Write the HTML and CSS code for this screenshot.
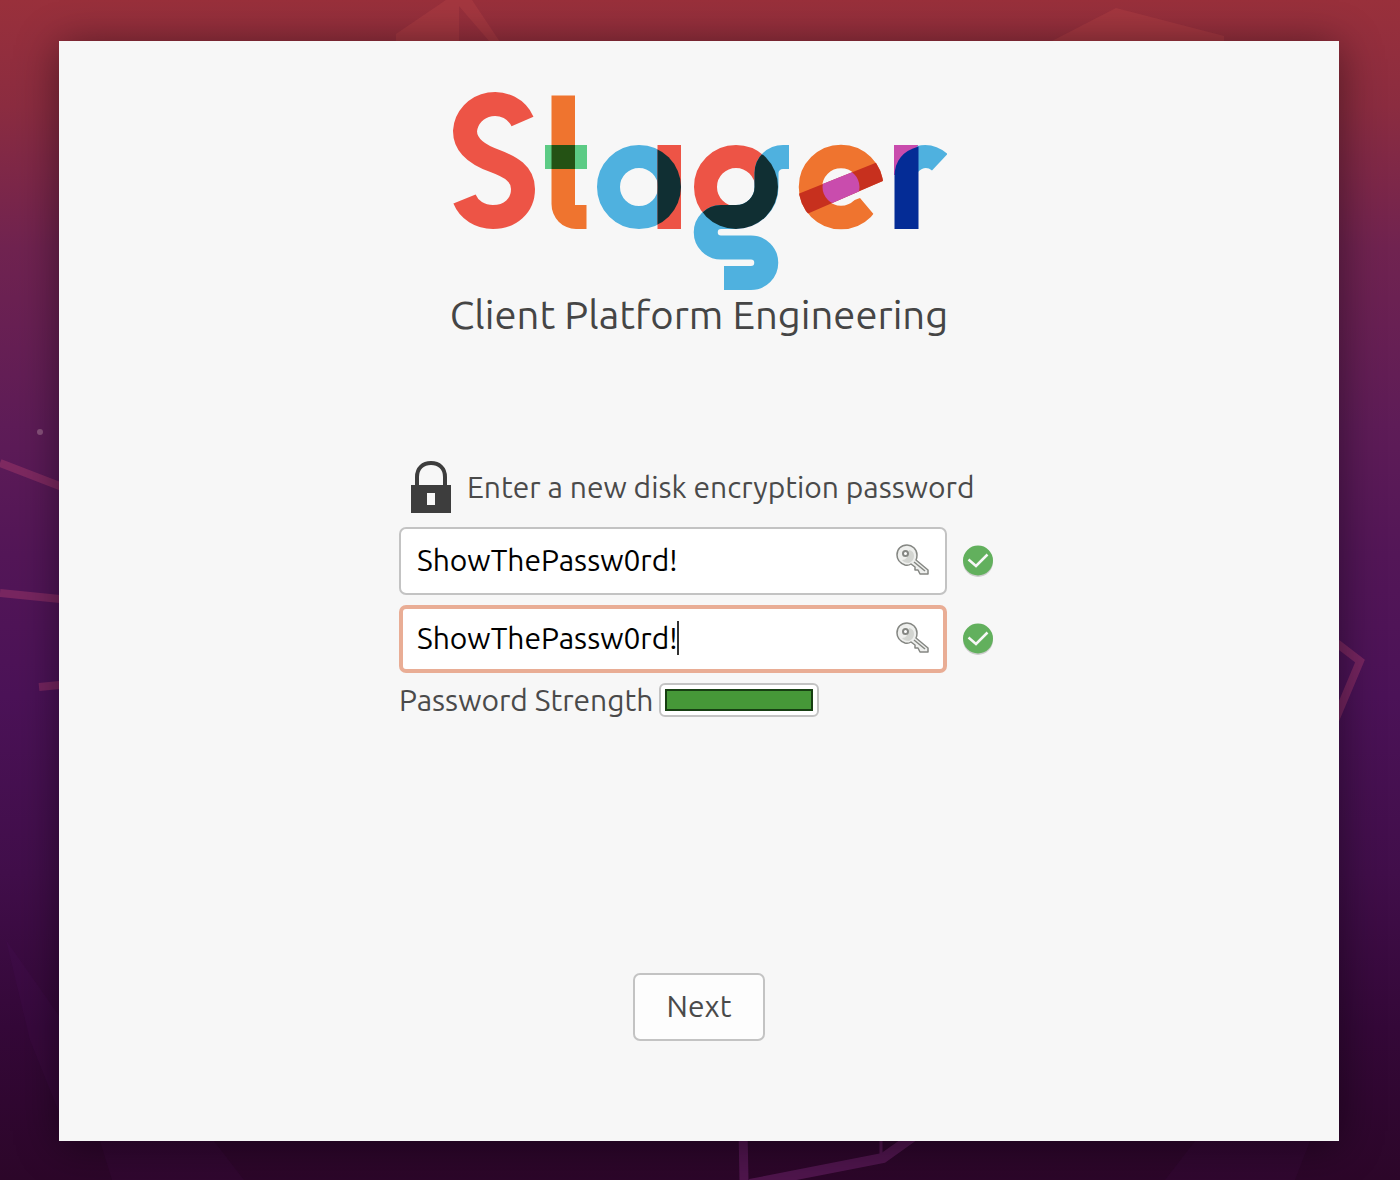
FILE: index.html
```html
<!DOCTYPE html>
<html lang="en">
<head>
<meta charset="utf-8">
<meta name="viewport" content="width=device-width, initial-scale=1">
<title>Stager</title>
<link rel="stylesheet" href="styles.css">
</head>
<body>
<svg class="wallpaper" viewBox="0 0 1400 1180" preserveAspectRatio="none" aria-hidden="true">
  <g fill="#c04a4a" opacity=".3">
    <path d="M396 34L446 0H472L500 42H490L459 6V42H396Z"/>
    <path d="M1050 42L1116 8L1224 36V42Z"/>
  </g>
  <g fill="none" stroke="#a83c6c" stroke-width="8" opacity=".45">
    <path d="M0 463L70 490M0 593L70 600M39 687L70 684M1330 638L1360 661L1326 742"/>
  </g>
  <g fill="none" stroke="#7a2878" opacity=".45">
    <path stroke-width="9" d="M743 1130L744 1180"/>
    <path stroke-width="10" d="M750 1184L883 1158L914 1136"/>
    <path stroke-width="3" d="M881 1136V1158"/>
  </g>
  <path fill="#7a2898" opacity=".06" d="M6 940L62 1020V1120L30 1040ZM100 1141H214L244 1180H112ZM1195 1141H1310L1295 1180H1165Z"/>
  <circle cx="40" cy="432" r="3" fill="#88527c"/>
</svg>

<main class="dialog">
  <header class="brand">
    <svg class="logo" viewBox="451 91 496 200" role="img" aria-label="Stager">
      <defs>
        <clipPath id="a-bowl"><circle cx="639" cy="187" r="42"/></clipPath>
        <clipPath id="g-bowl"><circle cx="736" cy="187" r="42"/></clipPath>
        <clipPath id="e-bowl"><circle cx="841" cy="187" r="42.500"/></clipPath>
        <clipPath id="e-hole"><circle cx="841" cy="187" r="18.500"/></clipPath>
        <clipPath id="e-opening"><path d="M790 140H890V178L840 199L852 201L860 198L876 217L890 235H790Z"/></clipPath>
        <path id="g-tail" fill="none" stroke-width="24" d="M789 157H783A16.500 16 0 0 0 766.500 173V187A30.500 30 0 0 1 736 217H721A15 15 0 0 0 721 247.500H751A15 15 0 0 1 751 278H724"/>
      </defs>
      <path fill="none" stroke="#ed5446" stroke-width="24" d="M522.500 121.500A30 29 0 0 0 465 131C465 146 478 155 495 161C511 167 523 174 523 189C523 206 510 217 493 217C480 217 469 210 464.500 199"/>
      <path fill="#ef742f" d="M551.500 95.500H575V205H586.500V229H576A24.500 25 0 0 1 551.500 204Z"/>
      <path fill="#5ccb85" d="M545 145H587V169H545Z"/>
      <path fill="#245214" d="M551.500 145H575V169H551.500Z"/>
      <circle cx="639" cy="187" r="30.500" fill="none" stroke="#4fb1df" stroke-width="23"/>
      <path fill="#ed5446" d="M657.500 145H681V229H657.500Z"/>
      <path fill="#102f33" clip-path="url(#a-bowl)" d="M657.500 145H681V229H657.500Z"/>
      <circle cx="736" cy="187" r="30.500" fill="none" stroke="#ed5446" stroke-width="23"/>
      <use href="#g-tail" stroke="#4fb1df"/>
      <use href="#g-tail" stroke="#102f33" clip-path="url(#g-bowl)"/>
      <circle cx="841" cy="187" r="30.500" fill="none" stroke="#ef742f" stroke-width="23.500" clip-path="url(#e-opening)"/>
      <path fill="#c7301e" clip-path="url(#e-bowl)" d="M798 194L890 157V178L800 217Z"/>
      <path fill="#c94cad" clip-path="url(#e-hole)" d="M798 194L890 157V178L800 217Z"/>
      <path fill="#c94cad" d="M894 145H918V175H894Z"/>
      <path fill="#4fb1df" d="M917 146Q934 142 947.500 154L932 170.500Q925 165 918 172Z"/>
      <path fill="#042c96" d="M894.500 229V176Q895 153 918.500 146.500V229Z"/>
    </svg>
    <h1 class="tagline">Client Platform Engineering</h1>
  </header>

  <form class="form">
    <div class="prompt">
      <svg class="lock" viewBox="0 0 40 52" aria-hidden="true">
        <path fill="none" stroke="#3d3d3d" stroke-width="4" d="M6 26V16C6 7 12 2 20 2S34 7 34 16V26"/>
        <path fill="#3d3d3d" fill-rule="evenodd" d="M0 24H40V52H0ZM16 32V44H24V32Z"/>
      </svg>
      <label for="password">Enter a new disk encryption password</label>
    </div>
    <div class="row">
      <div class="field">
        <input class="entry" id="password" type="text" value="ShowThePassw0rd!" autocomplete="off" spellcheck="false">
        <svg class="key" viewBox="0 0 34 32" aria-hidden="true">
          <g id="key-shape" stroke="#858783" stroke-width="1.500" stroke-linejoin="round">
            <path fill="#eeefed" d="M11 1C16 1 21 5 21 11Q21 14 20 16L32 26V30H24L22 26H19V23L15 20Q12 22 9 21Q1 18 1 11C1 5 5 1 11 1Z"/>
            <path fill="#d3d5d1" stroke="none" d="M13 6Q18 7 18 12T13 19Q8 19 6 16Q12 16 13 6Z"/>
            <circle cx="9.500" cy="9.500" r="2.500" fill="#fff" stroke-width="2"/>
            <path fill="none" d="M18 18L29 27"/>
          </g>
        </svg>
      </div>
      <svg class="check" viewBox="0 0 32 34" role="img" aria-label="Password accepted">
        <circle cx="16" cy="18" r="15" fill="#ccc"/>
        <circle cx="16" cy="16.500" r="15" fill="#62b05d"/>
        <path fill="none" stroke="#f7f7f7" stroke-width="2.500" d="M6.500 15.500L14 22L25.500 10.500"/>
      </svg>
    </div>
    <div class="row">
      <div class="field">
        <input class="entry entry-active" type="text" value="ShowThePassw0rd!" aria-label="Confirm password" autocomplete="off" spellcheck="false">
        <span class="caret"></span>
        <svg class="key" viewBox="0 0 34 32" aria-hidden="true"><use href="#key-shape"/></svg>
      </div>
      <svg class="check" viewBox="0 0 32 34" role="img" aria-label="Passwords match">
        <circle cx="16" cy="18" r="15" fill="#ccc"/>
        <circle cx="16" cy="16.500" r="15" fill="#62b05d"/>
        <path fill="none" stroke="#f7f7f7" stroke-width="2.500" d="M6.500 15.500L14 22L25.500 10.500"/>
      </svg>
    </div>
    <div class="strength">
      <label for="strength">Password Strength</label>
      <meter class="meter" id="strength" min="0" max="100" value="100"></meter>
    </div>
  </form>

  <button class="next" type="button">Next</button>
</main>
</body>
</html>
```

FILE: styles.css
```css
* {
  box-sizing: border-box;
}

body {
  margin: 0;
  min-height: 100vh;
  padding: 41px 61px 39px 59px;
  display: flex;
  position: relative;
  overflow-x: hidden;
  background: linear-gradient(#99303b 0%, #8b2c40 9%, #702350 21%, #5e1c57 36%, #531657 47%, #4b1257 59%, #410e4a 74%, #340838 87%, #2c0629 100%);
  color: #4a4a4a;
  font-family: Ubuntu, "Noto Sans", sans-serif;
  font-size: 30px;
  line-height: 34px;
}

.wallpaper {
  position: absolute;
  inset: 0;
  width: 100%;
  height: 100%;
}

.dialog {
  position: relative;
  flex: 1;
  display: flex;
  flex-direction: column;
  align-items: center;
  padding: 50px 24px 100px;
  background: #f7f7f7;
  box-shadow: 0 4px 40px rgba(0, 0, 0, .45);
}

.brand {
  display: flex;
  flex-direction: column;
  align-items: center;
}

.logo {
  width: 496px;
  max-width: 100%;
}

.tagline {
  margin: 0;
  font-size: 40px;
  font-weight: 400;
  line-height: 48px;
  color: #454545;
}

.form {
  width: 600px;
  max-width: 100%;
  margin: 122px 0 48px;
  display: flex;
  flex-direction: column;
  gap: 10px;
}

.prompt {
  display: flex;
  align-items: center;
  gap: 16px;
  padding: 0 12px 4px;
}

.lock {
  flex: none;
  width: 40px;
  height: 52px;
}

.row {
  display: flex;
  align-items: center;
  gap: 15px;
}

.field {
  position: relative;
  flex: 0 1 548px;
}

.entry {
  display: block;
  width: 100%;
  height: 68px;
  padding: 0 60px 2px 16px;
  border: 2px solid #c3c3c3;
  border-radius: 7px;
  outline: 0;
  background: #fff;
  color: #000;
  font: inherit;
}

.entry-active {
  padding-left: 14px;
  border: 4px solid #e9ad95;
}

.caret {
  position: absolute;
  left: 278px;
  top: 16px;
  width: 2px;
  height: 34px;
  background: #333;
}

.key {
  position: absolute;
  right: 17px;
  top: 17px;
  width: 34px;
  height: 32px;
}

.check {
  flex: none;
  width: 32px;
  height: 34px;
}

.strength {
  display: flex;
  align-items: center;
  gap: 6px;
}

.meter {
  appearance: none;
  display: block;
  width: 160px;
  height: 34px;
  padding: 4px;
  border: 2px solid #c3c3c3;
  border-radius: 6px;
  background: #fff;
}

.meter::-webkit-meter-inner-element {
  appearance: none;
  display: block;
  position: static;
  height: 22px;
  margin: 0;
}

.meter::-webkit-meter-bar {
  display: block;
  position: static;
  height: 22px;
  margin: 0;
  border: 0;
  border-radius: 0;
  background: #fff;
  transform: none;
}

.meter::-webkit-meter-optimum-value {
  position: static;
  box-sizing: border-box;
  height: 22px;
  margin: 0;
  border: 2px solid #173f12;
  background: #469838;
  transform: none;
}

.next {
  margin-top: auto;
  min-width: 132px;
  height: 68px;
  padding: 0 30px 2px;
  border: 2px solid #c3c3c3;
  border-radius: 7px;
  background: #fdfdfd;
  color: inherit;
  font: inherit;
}
```
